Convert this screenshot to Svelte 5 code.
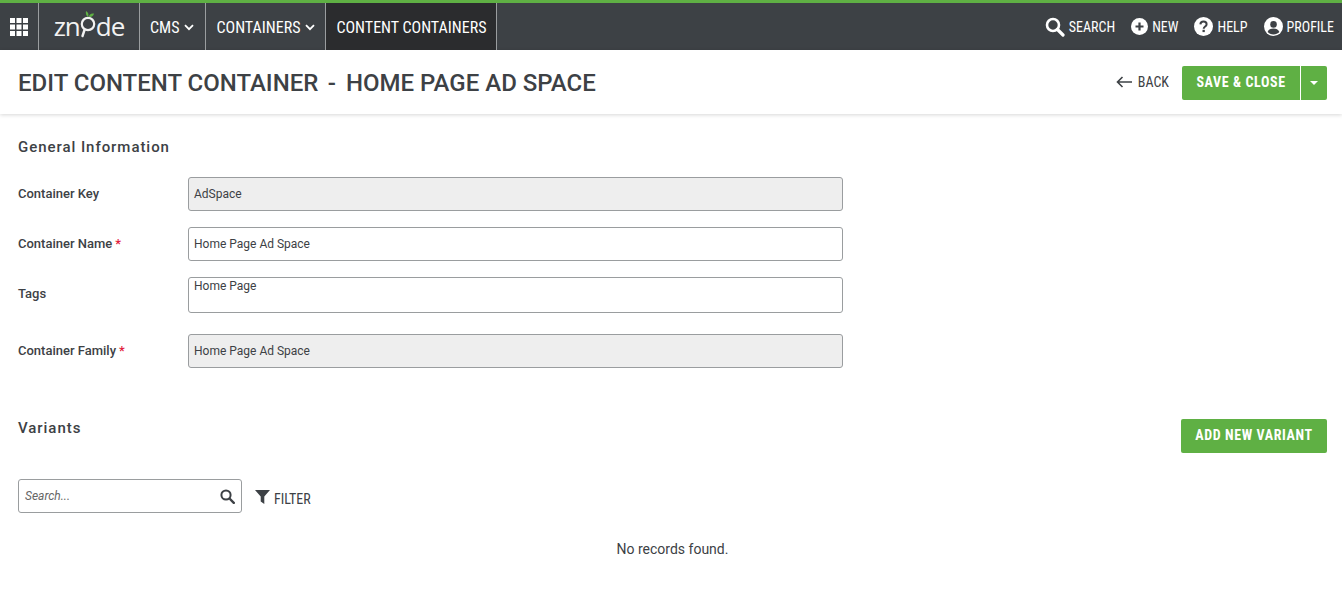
<script lang="ts">
	const fields = [
		{ label: 'Container Key', value: 'AdSpace', required: false, disabled: true, tall: false },
		{ label: 'Container Name', value: 'Home Page Ad Space', required: true, disabled: false, tall: false },
		{ label: 'Tags', value: 'Home Page', required: false, disabled: false, tall: true },
		{ label: 'Container Family', value: 'Home Page Ad Space', required: true, disabled: true, tall: false }
	];
</script>

<nav class="topbar">
	<div class="cell apps">
		<svg width="18" height="18" viewBox="0 0 18 18" fill="#fff">
			{#each [0, 6.5, 13] as y}
				{#each [0, 6.5, 13] as x}
					<rect {x} {y} width="5" height="5" />
				{/each}
			{/each}
		</svg>
	</div>
	<div class="cell logo">
		<span class="logo-text">zn</span>
		<svg class="logo-o" width="22" height="32" viewBox="0 0 22 32" fill="none">
			<circle cx="11" cy="16" r="6.2" stroke="#f2f2f2" stroke-width="2.2" />
			<path d="M7.5 22 L5.5 28" stroke="#f2f2f2" stroke-width="2.4" stroke-linecap="round" />
			<path d="M11 9 C9 7.5 8.5 5.5 9 3 C11.5 4.5 12 6.5 11 9Z" fill="#5fb044" />
			<path d="M12 9 C12 6.5 14 5 17 5.5 C16.5 8 14.5 9.5 12 9Z" fill="#5fb044" />
		</svg>
		<span class="logo-text">de</span>
	</div>
	<div class="cell menu cms">
		<span class="squeeze">CMS</span>
		<svg class="chev" width="10" height="7" viewBox="0 0 10 7"><path d="M1 1.2 5 5.2 9 1.2" fill="none" stroke="#fff" stroke-width="1.8" /></svg>
	</div>
	<div class="cell menu">
		<span class="squeeze">CONTAINERS</span>
		<svg class="chev" width="10" height="7" viewBox="0 0 10 7"><path d="M1 1.2 5 5.2 9 1.2" fill="none" stroke="#fff" stroke-width="1.8" /></svg>
	</div>
	<div class="cell menu active"><span class="squeeze">CONTENT CONTAINERS</span></div>

	<div class="actions">
		<div class="action">
			<svg width="20" height="20" viewBox="0 0 20 20" fill="none"><circle cx="8" cy="8" r="6" stroke="#fff" stroke-width="2.6" /><path d="M12.5 12.5 18 18" stroke="#fff" stroke-width="3.2" stroke-linecap="round" /></svg>
			<span class="squeeze small">SEARCH</span>
		</div>
		<div class="action">
			<svg width="17" height="17" viewBox="0 0 17 17"><circle cx="8.5" cy="8.5" r="8.5" fill="#fff" /><path d="M8.5 4.5v8M4.5 8.5h8" stroke="#3d4145" stroke-width="2.2" /></svg>
			<span class="squeeze small">NEW</span>
		</div>
		<div class="action">
			<svg width="19" height="19" viewBox="0 0 19 19"><circle cx="9.5" cy="9.5" r="9.5" fill="#fff" /><path d="M6.4 7.4C6.5 5.5 7.8 4.6 9.5 4.6c1.8 0 3.1 1 3.1 2.6 0 2.4-2.9 2.3-2.9 4.6" fill="none" stroke="#3d4145" stroke-width="2" /><rect x="8.5" y="12.8" width="2.3" height="2.3" fill="#3d4145" /></svg>
			<span class="squeeze small">HELP</span>
		</div>
		<div class="action">
			<svg width="19" height="19" viewBox="0 0 19 19"><circle cx="9.5" cy="9.5" r="9.5" fill="#fff" /><circle cx="9.5" cy="7.4" r="3.3" fill="#3d4145" /><path d="M3.6 15c1-2.6 3.2-3.6 5.9-3.6s4.9 1 5.9 3.6c-1.5 1.6-3.6 2.5-5.9 2.5S5.1 16.6 3.6 15Z" fill="#3d4145" /></svg>
			<span class="squeeze small">PROFILE</span>
		</div>
	</div>
</nav>

<header class="titlebar">
	<h1>EDIT CONTENT CONTAINER<span class="dash">-</span>HOME PAGE AD SPACE</h1>
	<div class="title-actions">
		<div class="back">
			<svg width="16" height="12" viewBox="0 0 16 12" fill="none"><path d="M16 6H1.5M6.5 1 1.5 6l5 5" stroke="#3d4145" stroke-width="1.6" /></svg>
			<span class="squeeze back-label">BACK</span>
		</div>
		<div class="split">
			<button class="btn save"><span class="squeeze-bold">SAVE &amp; CLOSE</span></button>
			<button class="btn caret" aria-label="More"><span class="tri"></span></button>
		</div>
	</div>
</header>

<main class="content">
	<h2 class="first">General Information</h2>
	<div class="form">
		{#each fields as f}
			<div class="row">
				<div class="label">{f.label}{#if f.required}<span class="req">*</span>{/if}</div>
				<div class="input" class:disabled={f.disabled} class:tall={f.tall}>{f.value}</div>
			</div>
		{/each}
	</div>

	<div class="variants-head">
		<h2>Variants</h2>
		<button class="btn add"><span class="squeeze-bold">ADD NEW VARIANT</span></button>
	</div>

	<div class="tools">
		<div class="search">
			<span class="placeholder">Search...</span>
			<svg width="15" height="15" viewBox="0 0 15 15" fill="none"><circle cx="6" cy="6" r="4.6" stroke="#3d4145" stroke-width="2" /><path d="M9.5 9.5 13.8 13.8" stroke="#3d4145" stroke-width="2.4" stroke-linecap="round" /></svg>
		</div>
		<div class="filter">
			<svg class="funnel" width="15" height="14" viewBox="0 0 15 14"><path d="M0 0h15L9.3 6.5V14L5.7 11.5V6.5Z" fill="#3d4145" /></svg>
			<span class="squeeze filter-label">FILTER</span>
		</div>
	</div>

	<p class="empty">No records found.</p>
</main>

<style>
	:global(body) {
		margin: 0;
		background: #fff;
		font-family: Roboto, 'Liberation Sans', sans-serif;
		color: #3d4145;
		overflow: hidden;
	}

	.topbar {
		display: flex;
		height: 47px;
		background: #3d4145;
		border-top: 3px solid #5fb044;
		color: #fff;
	}

	.cell {
		display: flex;
		align-items: center;
		border-right: 1px solid #9a9d9f;
	}

	.apps {
		width: 38px;
		justify-content: center;
	}

	.logo {
		width: 100px;
		justify-content: center;
	}

	.logo-text {
		font-family: 'Open Sans', sans-serif;
		font-weight: 400;
		font-size: 26px;
		line-height: 1;
		margin-top: -2px;
		letter-spacing: -1px;
		color: #f2f2f2;
	}

	.logo-o {
		margin: -6px -3px 0 -3px;
	}

	.menu {
		padding: 0 10px;
		gap: 5px;
		font-size: 16px;
	}

	.menu .squeeze {
		margin-top: 1px;
	}

	.cms {
		padding-right: 11px;
	}

	.menu.active {
		background: #2b2c2e;
	}

	.squeeze {
		display: inline-block;
		font-stretch: 75%;
		font-weight: 400;
	}

	.chev {
		margin-top: 1px;
	}

	.actions {
		display: flex;
		align-items: center;
		gap: 16px;
		margin-left: auto;
		padding-right: 8px;
	}

	.action {
		display: flex;
		align-items: center;
		gap: 4px;
	}

	.small {
		font-size: 14px;
	}

	.titlebar {
		display: flex;
		align-items: center;
		justify-content: space-between;
		box-sizing: border-box;
		height: 64px;
		padding: 2px 15px 0 18px;
		box-shadow: 0 1px 4px rgba(0, 0, 0, 0.16);
	}

	h1 {
		margin: 0;
		font-size: 24px;
		font-weight: 500;
		color: #3d4145;
	}

	.dash {
		margin: 0 10px 0 9.5px;
	}

	.title-actions {
		display: flex;
		align-items: center;
		gap: 13px;
	}

	.back {
		display: flex;
		align-items: center;
		gap: 6px;
		margin-top: -2px;
	}

	.back-label {
		font-size: 14px;
		font-weight: 400;
	}

	.split {
		display: flex;
		gap: 1px;
	}

	.btn {
		border: 0;
		background: #5fb044;
		color: #fff;
		height: 34px;
		font-family: inherit;
		padding: 0 0 2px;
	}

	.save {
		width: 118px;
		border-radius: 2px 0 0 2px;
		font-size: 14px;
	}

	.squeeze-bold {
		font-stretch: 75%;
		font-weight: 700;
		letter-spacing: 0.6px;
	}

	.caret {
		width: 26px;
		padding: 0;
		border-radius: 0 2px 2px 0;
		display: flex;
		align-items: center;
		justify-content: center;
	}

	.tri {
		width: 0;
		height: 0;
		border-left: 4px solid transparent;
		border-right: 4px solid transparent;
		border-top: 4px solid #fff;
	}

	.content {
		padding: 0 15px 0 18px;
	}

	h2 {
		margin: 0;
		font-size: 15px;
		font-weight: 500;
		letter-spacing: 0.95px;
		line-height: 18px;
		color: #3d4145;
	}

	.first {
		padding-top: 24px;
	}

	.form {
		display: flex;
		flex-direction: column;
		margin-top: 21px;
	}

	.row {
		display: flex;
		margin-bottom: 16px;
	}

	.row:nth-child(3) {
		margin-bottom: 21px;
	}

	.label {
		width: 170px;
		font-size: 13px;
		font-weight: 500;
		line-height: 34px;
	}

	.req {
		margin-left: 3px;
		color: #e2203c;
	}

	.input {
		box-sizing: border-box;
		width: 655px;
		height: 34px;
		padding: 0 5px;
		border: 1px solid #9a9d9f;
		border-radius: 3px;
		font-size: 12px;
		line-height: 32px;
	}

	.input.disabled {
		background: #eee;
	}

	.input.tall {
		height: 36px;
		line-height: 17px;
	}

	.variants-head {
		display: flex;
		justify-content: space-between;
		align-items: flex-start;
		margin-top: 35px;
	}

	.add {
		width: 146px;
		border-radius: 2px;
		font-size: 14px;
	}

	.tools {
		display: flex;
		align-items: center;
		gap: 13px;
		margin-top: 26px;
	}

	.search {
		box-sizing: border-box;
		display: flex;
		align-items: center;
		justify-content: space-between;
		width: 224px;
		height: 34px;
		padding: 0 6px;
		border: 1px solid #9a9d9f;
		border-radius: 3px;
	}

	.placeholder {
		font-size: 12px;
		font-style: italic;
		color: #666;
	}

	.filter {
		display: flex;
		align-items: center;
		gap: 4px;
	}

	.funnel {
		margin-top: 1px;
	}

	.filter-label {
		font-size: 14px;
		margin-top: 5px;
	}

	.empty {
		margin: 28px 0 0;
		text-align: center;
		font-size: 14px;
		line-height: 16px;
	}
</style>
